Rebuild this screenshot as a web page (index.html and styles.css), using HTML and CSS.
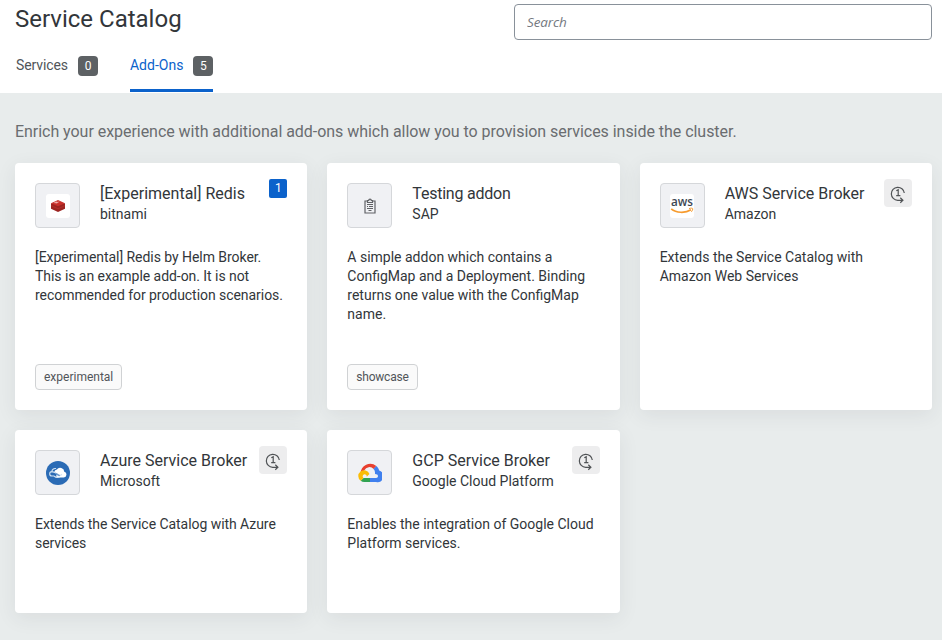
FILE: index.html
```html
<!DOCTYPE html>
<html lang="en">
<head>
<meta charset="utf-8">
<title>Service Catalog</title>
<link rel="stylesheet" href="styles.css">
</head>
<body>
<svg class="defs" width="0" height="0">
  <symbol id="provision" viewBox="0 0 28 28">
    <path d="M20.300 14A6.500 6.500 0 1 0 13.700 21.300H18.900M16.300 18.800l2.600 2.500-2.600 2.500M12.300 11.700l1.900-1v6.300M12.200 16.700h4.200" fill="none" stroke="#505356" stroke-width="1.200"/>
  </symbol>
</svg>
<header class="header">
  <div class="topbar">
    <h1 class="title">Service Catalog</h1>
    <input class="search" type="text" placeholder="Search">
  </div>
  <nav class="tabs">
    <a class="tab"><span class="tab-name">Services</span><span class="count">0</span></a>
    <a class="tab active"><span class="tab-name">Add-Ons</span><span class="count">5</span></a>
  </nav>
</header>
<main class="content">
  <p class="intro">Enrich your experience with additional add-ons which allow you to provision services inside the cluster.</p>
  <div class="grid">
    <article class="card">
      <div class="card-head">
        <div class="logo"><svg width="24" height="24" viewBox="0 0 24 24"><rect width="24" height="24" rx="3" fill="#fff"/><path d="M5 9.2v5.500l7 3.300 7-3.300V9.200z" fill="#9d2421"/><path d="M5 9.200L12 6l7 3.200-7 3.100z" fill="#c9302b"/><path d="M5 11.600l7 3.200 7-3.200" fill="none" stroke="#b8302b" stroke-width=".8"/><path d="M8 8.700l2.500-1 2 .7-2 .9zM12 7.200l1.500.4" fill="#efb5b0" stroke="#efb5b0" stroke-width=".3"/></svg></div>
        <div class="names"><h2>[Experimental] Redis</h2><p>bitnami</p></div>
        <span class="instances">1</span>
      </div>
      <p class="desc tight">[Experimental] Redis by Helm Broker. This is an example add-on. It is not recommended for production scenarios.</p>
      <div class="labels"><span class="label">experimental</span></div>
    </article>
    <article class="card">
      <div class="card-head">
        <div class="logo"><svg width="16" height="16" viewBox="0 0 16 16"><path d="M5.500 3H3v12h10V3h-2.500M5.500 4.500v-2h1.200a1.300 1.300 0 0 1 2.600 0h1.200v2z" fill="none" stroke="#606266" stroke-width="1.200"/><path d="M5 6.500h6M5 8.500h1M7 8.500h4M5 10.500h6M6.500 12.500h3" stroke="#606266"/></svg></div>
        <div class="names"><h2 class="narrow">Testing addon</h2><p>SAP</p></div>
      </div>
      <p class="desc">A simple addon which contains a ConfigMap and a Deployment. Binding returns one value with the ConfigMap name.</p>
      <div class="labels"><span class="label narrow">showcase</span></div>
    </article>
    <article class="card">
      <div class="card-head">
        <div class="logo"><svg width="24" height="24" viewBox="0 0 24 24"><rect width="24" height="24" rx="3" fill="#fff"/><text class="aws" x="12" y="12.200" text-anchor="middle" textLength="22" lengthAdjust="spacingAndGlyphs">aws</text><path d="M1.200 14.800c5 4.300 14 4.600 19.800 1" fill="none" stroke="#f79b2e" stroke-width="1.700"/><path d="M19 14.600c2-.7 4-.5 3.800.4-.2 1-.6 2-1.400 2.800" fill="none" stroke="#f79b2e"/></svg></div>
        <div class="names"><h2>AWS Service Broker</h2><p>Amazon</p></div>
        <span class="status"><svg width="28" height="28"><use href="#provision"/></svg></span>
      </div>
      <p class="desc">Extends the Service Catalog with Amazon Web Services</p>
    </article>
    <article class="card">
      <div class="card-head">
        <div class="logo"><svg width="24" height="24" viewBox="0 0 24 24"><circle cx="12" cy="12" r="12" fill="#2b6bb5"/><path d="M10.500 16.500h7.300a2.900 2.900 0 0 0 .5-5.700 4.200 4.200 0 0 0-7.500-2.300 3 3 0 0 0-2.300 3.200c2.300.2 3.500 1 5 2.300-.9.900-2 .8-3.200-.2z" fill="#fff"/><path d="M8 15H6a2.200 2.200 0 0 1-.2-4.400C6 8.200 8.200 7 10 7.600M5.800 10.600c2 0 4.200 1.200 6 3 1.200 1.300 3.500 1 4-.6M8 15c2 1.700 4.500 1.500 6 .8" fill="none" stroke="#d5e4f3" stroke-width="1.100"/><path d="M9.500 12.300c1.600.3 2.500 2.500 4.300 2.100" fill="none" stroke="#2b6bb5" stroke-width=".8"/></svg></div>
        <div class="names"><h2>Azure Service Broker</h2><p>Microsoft</p></div>
        <span class="status"><svg width="28" height="28"><use href="#provision"/></svg></span>
      </div>
      <p class="desc tight">Extends the Service Catalog with Azure services</p>
    </article>
    <article class="card">
      <div class="card-head">
        <div class="logo"><svg width="24" height="24" viewBox="0 0 24 24"><path d="M2.700 12.300A9.500 9.500 0 0 1 18.300 5L15.600 7.900A5.600 5.600 0 0 0 6.400 9.300z" fill="#e8402f"/><path d="M18.300 5c1.500 1.200 2.400 2.800 2.900 4.600a5.800 5.800 0 0 1-3 11.400H12v-4h6a1.900 1.900 0 0 0 .2-3.800l-1.200-.1c.2-2-.2-3.900-1.600-5.100z" fill="#4080ee"/><path d="M12 21H6.300a5.800 5.800 0 0 1-3.600-1.200l2.800-2.900.8.100H12z" fill="#31a352"/><path d="M2.700 19.800A5.800 5.800 0 1 1 11.500 13L8.700 15.800a2 2 0 1 0-3.200 1.100z" fill="#fbbc05"/></svg></div>
        <div class="names"><h2>GCP Service Broker</h2><p>Google Cloud Platform</p></div>
        <span class="status"><svg width="28" height="28"><use href="#provision"/></svg></span>
      </div>
      <p class="desc">Enables the integration of Google Cloud Platform services.</p>
    </article>
  </div>
</main>
</body>
</html>
```
FILE: styles.css
```css
* { box-sizing: border-box; }
body {
  margin: 0;
  height: 640px;
  overflow: hidden;
  background: #e8ecec;
  color: #32363a;
  font: 14px/19px Roboto, "Noto Sans", sans-serif;
}
h1, h2, p { margin: 0; font-weight: 400; }
.defs { display: block; }
.header {
  height: 93px;
  background: #fff;
  display: flex;
  flex-direction: column;
  justify-content: space-between;
}
.topbar {
  display: flex;
  justify-content: space-between;
  padding: 4px 10px 0 15px;
}
.title { font-size: 24px; line-height: 30px; }
.search {
  width: 418px;
  height: 36px;
  border: 1px solid #89919a;
  border-radius: 4px;
  background: #fff;
  padding: 0 12px;
  font: 13.5px "Open Sans", sans-serif;
  letter-spacing: -.1px;
}
.search::placeholder { color: #74797f; font-style: italic; opacity: 1; }
.tabs {
  display: flex;
  gap: 32px;
  padding: 0 16px 1px;
}
.tab {
  display: flex;
  gap: 10px;
  height: 40px;
  align-items: flex-start;
  color: #515559;
}
.tab:first-child { letter-spacing: -.1px; }
.tab.active { color: #0b62cb; border-bottom: 3px solid #0b62cb; border-radius: 2px 2px 0 0; }
.tab-name { padding-top: 4px; }
.count {
  width: 20px;
  height: 20px;
  margin-top: 4px;
  border-radius: 4px;
  background: #5d6164;
  color: #fff;
  font-size: 12px;
  line-height: 20px;
  text-align: center;
}
.content { padding: 28px 10px 0 15px; }
.intro { font-size: 16px; line-height: 22px; color: #6a6d70; white-space: nowrap; letter-spacing: -.04px; }
.grid {
  display: grid;
  grid-template-columns: repeat(3, 1fr);
  grid-template-rows: 247px 183px;
  gap: 20px;
  margin-top: 20px;
}
.card {
  display: flex;
  flex-direction: column;
  padding: 20px;
  background: #fff;
  border-radius: 4px;
  box-shadow: 0 5px 20px rgba(50, 54, 58, .08);
}
.card-head { display: flex; height: 45px; align-items: flex-start; }
.logo {
  width: 45px;
  height: 45px;
  flex: none;
  display: flex;
  align-items: center;
  justify-content: center;
  background: #f0f1f4;
  border: 1px solid #d5d7da;
  border-radius: 4px;
}
.aws { font: 600 12.5px "Open Sans", sans-serif; fill: #3d4754; }
.names { flex: 1; margin-left: 20px; white-space: nowrap; }
.names h2 { font-size: 16px; line-height: 21px; }
.names p { line-height: 20px; }
.narrow { letter-spacing: -.22px; }
.tight { letter-spacing: -.05px; }
.instances {
  width: 18px;
  height: 19px;
  margin-top: -4px;
  border-radius: 2px;
  background: #0b62cb;
  color: #fff;
  font-size: 12px;
  line-height: 18px;
  text-align: center;
}
.status {
  width: 28px;
  height: 28px;
  margin-top: -4px;
  border-radius: 4px;
  background: #ededee;
}
.status svg { display: block; }
.desc { margin-top: 20px; }
.labels { display: flex; margin-top: auto; }
.label {
  height: 26px;
  padding: 0 8px;
  border: 1px solid #d0d2d4;
  border-radius: 4px;
  background: #fafafa;
  color: #515559;
  font-size: 12px;
  line-height: 24px;
}
```
